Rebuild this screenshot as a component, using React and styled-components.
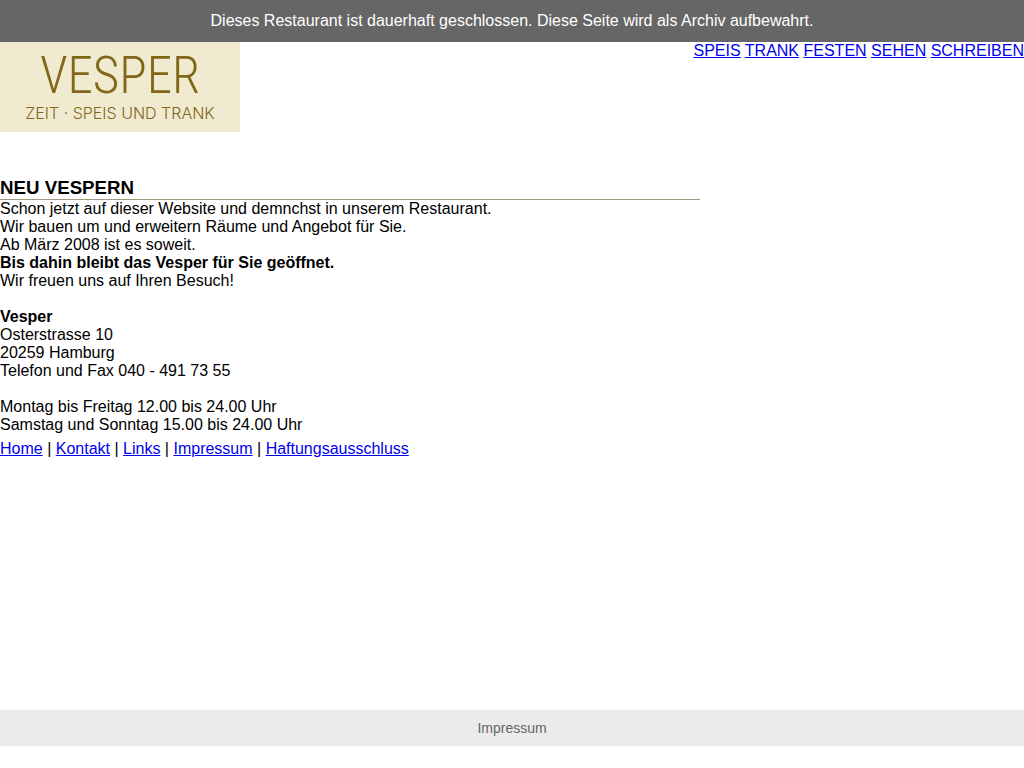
import React from "react";
import styled, { createGlobalStyle } from "styled-components";

const GlobalStyle = createGlobalStyle`
  body {
    margin: 0;
    background: #fff;
    color: #000;
    font-family: "Liberation Sans", Arial, sans-serif;
    font-size: 16px;
    line-height: 18px;
  }
`;

const Page = styled.div`
  display: flex;
  flex-direction: column;
  min-height: 100vh;
`;

const Notice = styled.div`
  padding: 12px;
  background: #666;
  color: #fff;
  text-align: center;
`;

const Header = styled.header`
  display: flex;
  justify-content: space-between;
  align-items: flex-start;
`;

const Logo = styled.div`
  display: flex;
  flex-direction: column;
  align-items: center;
  box-sizing: border-box;
  width: 240px;
  height: 90px;
  padding-top: 10px;
  background: #f0ead0;
  color: #806818;
  white-space: nowrap;
`;

const LogoName = styled.span`
  font-family: "Roboto Condensed", Lato, sans-serif;
  font-weight: 300;
  font-size: 51px;
  line-height: 48px;
`;

const LogoTagline = styled.span`
  font-family: Inter, Roboto, sans-serif;
  font-weight: 300;
  font-size: 16px;
  line-height: 26px;
`;

const TextLink = styled.a`
  color: #0000ee;
  text-decoration: underline;
`;

const Main = styled.main`
  max-width: 700px;
  padding-top: 45px;
`;

const Title = styled.h3`
  margin: 0;
  padding-bottom: 1px;
  border-bottom: 1px solid #a09880;
  line-height: 21px;
`;

const Paragraph = styled.p`
  margin: 0 0 ${(p) => (p.$last ? 6 : 18)}px;
`;

const Footer = styled.footer`
  margin: auto 0 22px;
  padding: 10px;
  background: #ebebeb;
  font-size: 14px;
  line-height: 16px;
  text-align: center;
`;

const FooterLink = styled.a`
  color: #666;
  text-decoration: none;
`;

const sections = ["SPEIS", "TRANK", "FESTEN", "SEHEN", "SCHREIBEN"];
const pages = ["Home", "Kontakt", "Links", "Impressum", "Haftungsausschluss"];

function LinkList({ items, separator }) {
  return items.map((item, i) => (
    <React.Fragment key={item}>
      {i > 0 && separator}
      <TextLink href={"#" + item.toLowerCase()}>{item}</TextLink>
    </React.Fragment>
  ));
}

export default function App() {
  return (
    <Page>
      <GlobalStyle />
      <Notice>
        Dieses Restaurant ist dauerhaft geschlossen. Diese Seite wird als Archiv
        aufbewahrt.
      </Notice>
      <Header>
        <Logo>
          <LogoName>VESPER</LogoName>
          <LogoTagline>ZEIT · SPEIS UND TRANK</LogoTagline>
        </Logo>
        <nav>
          <LinkList items={sections} separator=" " />
        </nav>
      </Header>
      <Main>
        <Title>NEU VESPERN</Title>
        <Paragraph>
          Schon jetzt auf dieser Website und demnchst in unserem Restaurant.
          <br />
          Wir bauen um und erweitern Räume und Angebot für Sie.
          <br />
          Ab März 2008 ist es soweit.
          <br />
          <strong>Bis dahin bleibt das Vesper für Sie geöffnet.</strong>
          <br />
          Wir freuen uns auf Ihren Besuch!
        </Paragraph>
        <Paragraph>
          <strong>Vesper</strong>
          <br />
          Osterstrasse 10
          <br />
          20259 Hamburg
          <br />
          Telefon und Fax 040 - 491 73 55
        </Paragraph>
        <Paragraph $last>
          Montag bis Freitag 12.00 bis 24.00 Uhr
          <br />
          Samstag und Sonntag 15.00 bis 24.00 Uhr
        </Paragraph>
        <nav>
          <LinkList items={pages} separator=" | " />
        </nav>
      </Main>
      <Footer>
        <FooterLink href="#impressum">Impressum</FooterLink>
      </Footer>
    </Page>
  );
}
